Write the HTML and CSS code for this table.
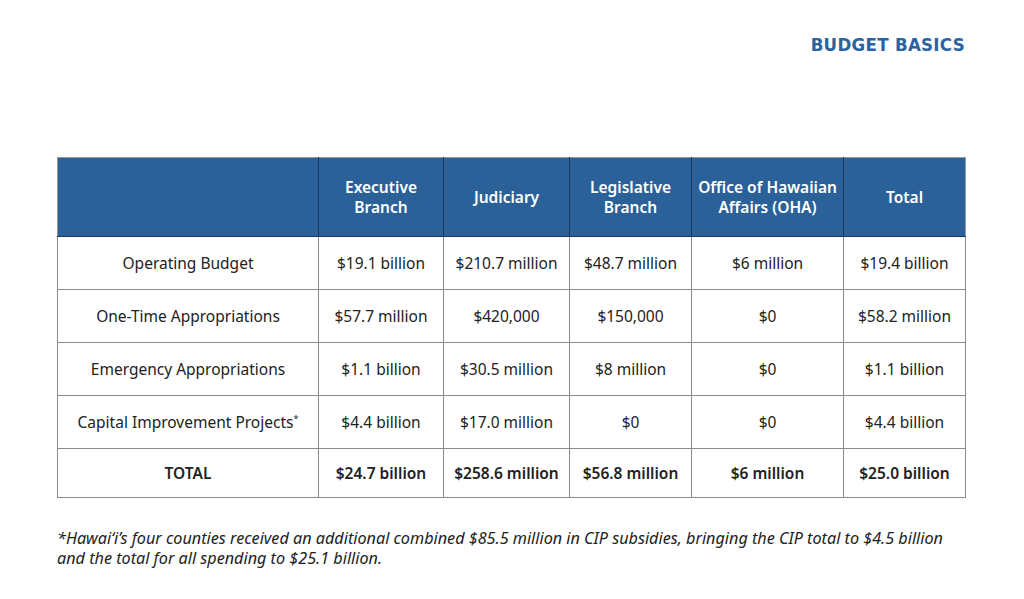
FILE: index.html
```html
<!DOCTYPE html>
<html lang="en">
<head>
<meta charset="utf-8">
<link rel="stylesheet" href="styles.css">
</head>
<body>
<div class="page">
  <header class="top">
    <h1 class="title">BUDGET BASICS</h1>
  </header>
  <table class="budget">
    <colgroup>
      <col class="c0"><col class="c1"><col class="c2"><col class="c3"><col class="c4"><col class="c5">
    </colgroup>
    <thead>
      <tr>
        <th></th>
        <th>Executive<br>Branch</th>
        <th>Judiciary</th>
        <th>Legislative<br>Branch</th>
        <th>Office of Hawaiian<br>Affairs (OHA)</th>
        <th>Total</th>
      </tr>
    </thead>
    <tbody>
      <tr>
        <td>Operating Budget</td>
        <td>$19.1 billion</td>
        <td>$210.7 million</td>
        <td>$48.7 million</td>
        <td>$6 million</td>
        <td>$19.4 billion</td>
      </tr>
      <tr>
        <td>One-Time Appropriations</td>
        <td>$57.7 million</td>
        <td>$420,000</td>
        <td>$150,000</td>
        <td>$0</td>
        <td>$58.2 million</td>
      </tr>
      <tr>
        <td>Emergency Appropriations</td>
        <td>$1.1 billion</td>
        <td>$30.5 million</td>
        <td>$8 million</td>
        <td>$0</td>
        <td>$1.1 billion</td>
      </tr>
      <tr>
        <td>Capital Improvement Projects<sup>*</sup></td>
        <td>$4.4 billion</td>
        <td>$17.0 million</td>
        <td>$0</td>
        <td>$0</td>
        <td>$4.4 billion</td>
      </tr>
      <tr class="total">
        <td>TOTAL</td>
        <td>$24.7 billion</td>
        <td>$258.6 million</td>
        <td>$56.8 million</td>
        <td>$6 million</td>
        <td>$25.0 billion</td>
      </tr>
    </tbody>
  </table>
  <p class="note">*Hawai‘i’s four counties received an additional combined $85.5 million in CIP subsidies, bringing the CIP total to $4.5 billion and the total for all spending to $25.1 billion.</p>
</div>
</body>
</html>
```
FILE: styles.css
```css
html, body {
  margin: 0;
  padding: 0;
  background: #ffffff;
}
body {
  font-family: "Noto Sans", "Open Sans", sans-serif;
  color: #1d1d1d;
}
.page {
  width: 1024px;
  height: 599px;
  box-sizing: border-box;
  padding: 34px 59px 0 57px;
}
.top {
  display: flex;
  justify-content: flex-end;
  height: 22px;
}
.title {
  margin: 0;
  font-family: "DejaVu Sans Condensed", "Liberation Sans Narrow", sans-serif;
  font-weight: bold;
  font-size: 18.5px;
  line-height: 22px;
  color: #2b62a0;
  letter-spacing: 0.3px;
}
.budget {
  margin-top: 101px;
  width: 908px;
  border-collapse: collapse;
  table-layout: fixed;
  font-size: 15.5px;
}
.c0 { width: 261px; }
.c1 { width: 125px; }
.c2 { width: 126px; }
.c3 { width: 122px; }
.c4 { width: 152px; }
.c5 { width: 122px; }
.budget th {
  background: #2a6199;
  color: #ffffff;
  font-weight: 600;
  height: 78px;
  line-height: 20px;
  padding: 0;
  border: 1px solid #163a63;
  border-top: 1px solid #9a9a9a;
  text-align: center;
}
.budget th:first-child { border-left: 1px solid #9a9a9a; }
.budget th:last-child { border-right: 1px solid #9a9a9a; }
.budget td {
  border: 1px solid #8c8c8c;
  text-align: center;
  height: 52px;
  padding: 0;
  color: #222;
}
.budget tr.total td {
  font-weight: 600;
  height: 48px;
}
.budget sup {
  font-size: 9px;
  vertical-align: 6px;
  line-height: 0;
}
.note {
  margin: 30px 0 0 0;
  font-style: italic;
  font-size: 16.2px;
  line-height: 20px;
  color: #222;
}
```
